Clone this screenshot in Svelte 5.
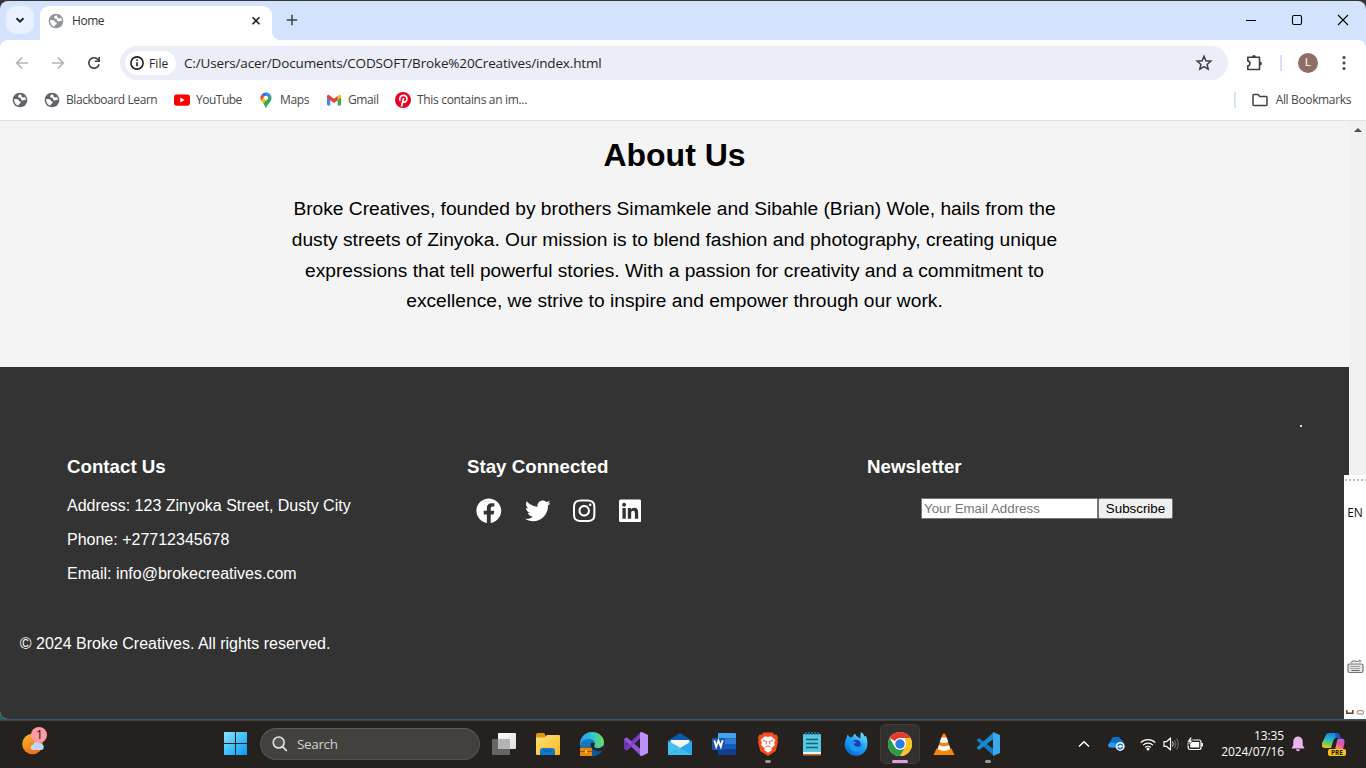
<script>
  const contact = [
    'Address: 123 Zinyoka Street, Dusty City',
    'Phone: +27712345678',
    'Email: info@brokecreatives.com'
  ];
  const social = [
    { name: 'Facebook', w: 512, d: 'M504 256C504 119 393 8 256 8S8 119 8 256c0 123.78 90.69 226.38 209.25 245V327.69h-63V256h63v-54.64c0-62.15 37-96.48 93.67-96.48 27.14 0 55.52 4.84 55.52 4.84v61h-31.28c-30.8 0-40.41 19.12-40.41 38.73V256h68.78l-11 71.69h-57.78V501C413.31 482.38 504 379.78 504 256z' },
    { name: 'Twitter', w: 512, d: 'M459.37 151.716c.325 4.548.325 9.097.325 13.645 0 138.72-105.583 298.558-298.558 298.558-59.452 0-114.68-17.219-161.137-47.106 8.447.974 16.568 1.299 25.34 1.299 49.055 0 94.213-16.568 130.274-44.832-46.132-.975-84.792-31.188-98.112-72.772 6.498.974 12.995 1.624 19.818 1.624 9.421 0 18.843-1.3 27.614-3.573-48.081-9.747-84.143-51.98-84.143-102.985v-1.299c13.969 7.797 30.214 12.67 47.431 13.319-28.264-18.843-46.781-51.005-46.781-87.391 0-19.492 5.197-37.36 14.294-52.954 51.655 63.675 129.3 105.258 216.365 109.807-1.624-7.797-2.599-15.918-2.599-24.04 0-57.828 46.782-104.934 104.934-104.934 30.213 0 57.502 12.67 76.67 33.137 23.715-4.548 46.456-13.32 66.599-25.34-7.798 24.366-24.366 44.833-46.132 57.827 21.117-2.273 41.584-8.122 60.426-16.243-14.292 20.791-32.161 39.308-52.628 54.253z' },
    { name: 'Instagram', w: 448, d: 'M224.1 141c-63.6 0-114.9 51.3-114.9 114.9s51.3 114.9 114.9 114.9S339 319.5 339 255.9 287.7 141 224.1 141zm0 189.6c-41.1 0-74.7-33.5-74.7-74.7s33.5-74.7 74.7-74.7 74.7 33.5 74.7 74.7-33.6 74.7-74.7 74.7zm146.4-194.3c0 14.9-12 26.8-26.8 26.8-14.9 0-26.8-12-26.8-26.8s12-26.8 26.8-26.8 26.8 12 26.8 26.8zm76.1 27.2c-1.7-35.9-9.9-67.7-36.2-93.9-26.2-26.2-58-34.4-93.9-36.2-37-2.1-147.9-2.1-184.9 0-35.8 1.7-67.6 9.9-93.9 36.1s-34.4 58-36.2 93.9c-2.1 37-2.1 147.9 0 184.9 1.7 35.9 9.9 67.7 36.2 93.9s58 34.4 93.9 36.2c37 2.1 147.9 2.1 184.9 0 35.9-1.7 67.7-9.9 93.9-36.2 26.2-26.2 34.4-58 36.2-93.9 2.1-37 2.1-147.8 0-184.8zM398.8 388c-7.8 19.6-22.9 34.7-42.6 42.6-29.5 11.7-99.5 9-132.1 9s-102.7 2.6-132.1-9c-19.6-7.8-34.7-22.9-42.6-42.6-11.7-29.5-9-99.5-9-132.1s-2.6-102.7 9-132.1c7.8-19.6 22.9-34.7 42.6-42.6 29.5-11.7 99.5-9 132.1-9s102.7-2.6 132.1 9c19.6 7.8 34.7 22.9 42.6 42.6 11.7 29.5 9 99.5 9 132.1s2.7 102.7-9 132.1z' },
    { name: 'LinkedIn', w: 448, d: 'M416 32H31.9C14.3 32 0 46.5 0 64.3v383.4C0 465.5 14.3 480 31.9 480H416c17.6 0 32-14.5 32-32.3V64.3c0-17.8-14.4-32.3-32-32.3zM135.4 416H69V202.2h66.5V416zm-33.2-243c-21.3 0-38.5-17.3-38.5-38.5S80.9 96 102.2 96c21.2 0 38.5 17.3 38.5 38.5 0 21.3-17.2 38.5-38.5 38.5zm282.1 243h-66.4V312c0-24.8-.5-56.7-34.5-56.7-34.6 0-39.9 27-39.9 54.9V416h-66.4V202.2h63.7v29.2h.9c8.9-16.8 30.6-34.5 62.2-34.5 66.5 0 79.9 43.8 79.9 100.9V416z' }
  ];
</script>

{#snippet globe(color)}
  <svg width="16" height="16" viewBox="0 0 16 16">
    <circle cx="8" cy="8" r="7.300" fill={color} />
    <path d="M8.600 2.200C6.600 2.800 5.600 4.200 6.400 5.300c.5.800 1.900.4 2.500 1.200.5.800.3 1.700 1.400 1.900 1 .2 1.600-.8 3.400-.2.300-1.500 0-2.500-.5-3.400-1.100.5-2.200.9-3 .2-.8-.7-.9-1.700-1.600-2.800z" fill="#fff" />
    <path d="M2.100 7.200c1.400-.4 3.300-.3 4.300.6.8.7.6 1.500 1.600 1.800.9.300 1 1.100.3 1.600-.8.600-1.300.7-1.400 1.500l-.1.900C4 13.100 1.900 10.500 2.100 7.200z" fill="#fff" />
  </svg>
{/snippet}

<div class="screen">
  <div class="browser">
    <header class="tabs">
      <button class="tabsearch" aria-label="Search tabs">
        <svg width="12" height="12" viewBox="0 0 12 12"><path d="M2.500 4.200 6 7.600l3.500-3.400" fill="none" stroke="#1f1f1f" stroke-width="1.900" /></svg>
      </button>
      <div class="tab">
        {@render globe('#8f959b')}
        <span class="ui tabname">Home</span>
        <svg class="tabx" width="10" height="10" viewBox="0 0 10 10"><path d="M1.500 1.200l7 7m0-7l-7 7" stroke="#1f1f1f" stroke-width="1.600" /></svg>
      </div>
      <div class="flare"></div>
      <svg class="plus" width="12" height="12" viewBox="0 0 12 12"><path d="M6 .8v10.400M.8 6h10.400" stroke="#3c4043" stroke-width="1.500" /></svg>
      <div class="winctl">
        <svg width="12" height="12" viewBox="0 0 12 12"><path d="M1 6.500h10" stroke="#000" /></svg>
        <svg width="12" height="12" viewBox="0 0 12 12"><rect x="1.500" y="1.500" width="9" height="9" rx="1.500" fill="none" stroke="#000" stroke-width="1.100" /></svg>
        <svg width="12" height="12" viewBox="0 0 12 12"><path d="M1 1l10 10M11 1L1 11" stroke="#000" stroke-width="1.100" /></svg>
      </div>
    </header>

    <div class="toolbar">
      <svg class="nav" width="16" height="16" viewBox="0 0 16 16"><path d="M14 8H3M8 2.600 2.600 8 8 13.400" fill="none" stroke="#b4b4b4" stroke-width="1.600" /></svg>
      <svg class="nav" width="16" height="16" viewBox="0 0 16 16"><path d="M2 8h11M8 2.600 13.400 8 8 13.400" fill="none" stroke="#b4b4b4" stroke-width="1.600" /></svg>
      <svg class="nav" width="16" height="16" viewBox="0 0 16 16"><path d="M13.100 9.300A5.200 5.200 0 1 1 12 4.600l1 1" fill="none" stroke="#3c4043" stroke-width="1.600" /><path d="M13.200 2v4.300H8.800" fill="none" stroke="#3c4043" stroke-width="1.600" /></svg>
      <div class="omni">
        <div class="chip">
          <svg width="14" height="14" viewBox="0 0 14 14"><circle cx="7" cy="7" r="6.100" fill="none" stroke="#1f1f1f" stroke-width="1.600" /><path d="M7 6.200v4" stroke="#1f1f1f" stroke-width="1.600" /><circle cx="7" cy="4.100" r=".95" fill="#1f1f1f" /></svg>
          <span class="ui file">File</span>
        </div>
        <span class="ui url">C:/Users/acer/Documents/CODSOFT/Broke%20Creatives/index.html</span>
        <svg class="star" width="18" height="18" viewBox="0 0 18 18"><path d="M9 2.200l1.900 4.600 4.900.4-3.700 3.200 1.100 4.800L9 12.600l-4.200 2.600 1.100-4.800-3.700-3.200 4.900-.4z" fill="none" stroke="#3c4043" stroke-width="1.500" /></svg>
      </div>
      <svg class="puzzle" width="18" height="18" viewBox="0 0 18 18"><path d="M2.800 3.300h11.700v12.200H2.800v-3.600c1.400-.2 2.100-1.200 2.100-2.500s-.7-2.300-2.100-2.500z" fill="none" stroke="#3c4043" stroke-width="1.600" stroke-linejoin="round" /><path d="M7 3a1.900 1.900 0 0 1 3.800 0M15 7.500a1.900 1.900 0 0 1 0 3.800" fill="#3c4043" /></svg>
      <i class="sep"></i>
      <div class="avatar">L</div>
      <svg class="kebab" width="4" height="16" viewBox="0 0 4 16"><g fill="#3c4043"><circle cx="2" cy="2.600" r="1.500" /><circle cx="2" cy="8" r="1.500" /><circle cx="2" cy="13.400" r="1.500" /></g></svg>
    </div>

    <nav class="marks ui">
      <div class="mk" style:width="32px">{@render globe('#5f6368')}</div>
      <div class="mk" style:width="130px">{@render globe('#5f6368')}<span class="m1">Blackboard Learn</span></div>
      <div class="mk" style:width="84px">
        <svg width="16" height="16" viewBox="0 0 16 16"><rect y="2.500" width="16" height="11.200" rx="2.400" fill="#f00" /><path d="M6.300 5.600v5L10.600 8.100z" fill="#fff" /></svg>
        <span class="m2">YouTube</span>
      </div>
      <div class="mk" style:width="68px">
        <svg width="16" height="16" viewBox="0 0 16 16"><path d="M8 .5a5.500 5.500 0 0 0-4.300 2L6.300 4.700 9.700.8z" fill="#1a73e8" /><path d="M3.700 2.500A5.500 5.500 0 0 0 3.200 8.500L6.300 4.700z" fill="#ea4335" /><path d="M9.700.8 6.300 4.700A2.200 2.200 0 0 1 9.800 7.300L13 3.600A5.500 5.500 0 0 0 9.700.8z" fill="#4285f4" /><path d="M6.200 4.800 3.100 8.500c.5 1 1.300 2 2.200 3L9.800 7.200z" fill="#fbbc04" /><path d="M13 3.600 5.300 11.500C6.400 12.800 7 14 7.500 15.400q.5.700 1 0c1-3.400 5-5.400 5-9.400 0-.9-.2-1.700-.5-2.400z" fill="#34a853" /><circle cx="8" cy="6" r="2" fill="#fff" /></svg>
        <span class="m3">Maps</span>
      </div>
      <div class="mk" style:width="69px">
        <svg width="16" height="16" viewBox="0 0 16 16"><path d="M1 4v8.500q0 1 1 1h2.300V6z" fill="#4285f4" /><path d="M15 4v8.500q0 1-1 1h-2.300V6z" fill="#34a853" /><path d="M11.700 4l2-1.300Q15 2.500 15 4.200v1.500l-3.300 2.600z" fill="#fbbc04" /><path d="M1 5.700V4.200Q1.200 2 3 3l5 3.800L11.700 4v4.300L8 11 4.300 8.300z" fill="#ea4335" /></svg>
        <span class="m4">Gmail</span>
      </div>
      <div class="mk">
        <svg width="16" height="16" viewBox="0 0 16 16"><circle cx="8" cy="8" r="8" fill="#e60023" /><path d="M5.300 8.900C3.800 6 5.500 3.400 8.300 3.400c2.400 0 3.800 1.500 3.600 3.600-.3 2.400-2.300 3.900-3.900 2.800M8.600 6 6.500 14.500" fill="none" stroke="#fff" stroke-width="1.700" /></svg>
        <span class="m5">This contains an im...</span>
      </div>
      <i class="sep right"></i>
      <svg class="folder" width="18" height="16" viewBox="0 0 18 16"><path d="M2 3.500q0-1 1-1h4l1.800 2H15q1 0 1 1v7q0 1-1 1H3q-1 0-1-1z" fill="none" stroke="#3c4043" stroke-width="1.500" /></svg>
      <span class="m6">All Bookmarks</span>
    </nav>

    <div class="view">
      <main class="page">
        <section class="about">
          <h1>About Us</h1>
          <p>Broke Creatives, founded by brothers Simamkele and Sibahle (Brian) Wole, hails from the dusty streets of Zinyoka. Our mission is to blend fashion and photography, creating unique expressions that tell powerful stories. With a passion for creativity and a commitment to excellence, we strive to inspire and empower through our work.</p>
        </section>
        <footer>
          <i class="speck"></i>
          <div class="cols">
            <div>
              <h3>Contact Us</h3>
              {#each contact as line}<p>{line}</p>{/each}
            </div>
            <div>
              <h3>Stay Connected</h3>
              <div class="social">
                {#each social as s}
                  <svg height="25.600" width={s.w / 20} viewBox="0 0 {s.w} 512" aria-label={s.name}><path d={s.d} fill="#fff" /></svg>
                {/each}
              </div>
            </div>
            <div>
              <h3>Newsletter</h3>
              <form class="news">
                <input type="email" placeholder="Your Email Address" />
                <button type="button">Subscribe</button>
              </form>
            </div>
          </div>
          <p class="copy">© 2024 Broke Creatives. All rights reserved.</p>
        </footer>
      </main>
      <div class="scroll"><i></i></div>
    </div>
  </div>

  <aside class="lang">
    <i class="grip"></i>
    <span>EN</span>
    <svg class="kb" width="17" height="15" viewBox="0 0 17 15"><path d="M4 3.800q2-2.600 4-1.700 2.500 1.500 5-1.300M12.500 3.500 14 1.500" fill="none" stroke="#888" stroke-width="1.200" /><rect x="1" y="5" width="15" height="8.500" rx="1.500" fill="#e4e4e4" stroke="#777" stroke-width="1.200" /><path d="M3.500 7.500h10M3.500 9.500h10" stroke="#666" stroke-dasharray="1 1" /><path d="M4.500 11.500h8" stroke="#666" /></svg>
    <svg class="cut" width="20" height="5" viewBox="0 0 20 5"><path d="M1.800 0v3.300h6V0" fill="none" stroke="#6d3a24" stroke-width="1.500" /><rect x="12" y=".7" width="6.500" height="3.300" rx="1.500" fill="none" stroke="#96705c" /></svg>
  </aside>

  <div class="taskbar ui">
    <div class="weather">
      <svg width="30" height="30" viewBox="0 0 30 30">
        <defs><linearGradient id="sun" x1="0" y1="0" x2=".5" y2="1"><stop offset="0" stop-color="#f9bb2d" /><stop offset="1" stop-color="#ee6f14" /></linearGradient></defs>
        <circle cx="11.500" cy="17" r="10.300" fill="url(#sun)" />
        <path d="M11.500 23a2.700 2.700 0 0 1 .5-5.300 4.500 4.500 0 0 1 8.200-.6A3 3 0 0 1 20.500 23z" fill="#bcd7fa" />
        <circle cx="18" cy="8" r="8" fill="#ff9ba6" />
      </svg>
      <b>1</b>
    </div>
    <svg class="start" width="24" height="24" viewBox="0 0 24 24">
      <defs><linearGradient id="win" gradientUnits="userSpaceOnUse" x1="0" y1="0" x2="24" y2="24"><stop offset="0" stop-color="#8ce2ff" /><stop offset=".5" stop-color="#3dc1fa" /><stop offset="1" stop-color="#0a8ff5" /></linearGradient></defs>
      <path d="M0 0h11v11H0zM12 0h11v11H12zM0 12h11v11H0zM12 12h11v11H12z" fill="url(#win)" />
    </svg>
    <div class="search">
      <svg width="16" height="16" viewBox="0 0 16 16"><circle cx="6.700" cy="6.500" r="5.500" fill="#66656180" stroke="#e3e3e3" stroke-width="1.600" /><path d="M10.800 10.800l3.500 3.700" stroke="#e3e3e3" stroke-width="1.800" stroke-linecap="round" /></svg>
      <span>Search</span>
    </div>
    <div class="apps">
      <div class="app"><svg width="24" height="24" viewBox="0 0 24 24"><defs><linearGradient id="tv" x1="0" y1="0" x2="1" y2="1"><stop stop-color="#fff" /><stop offset="1" stop-color="#ddd" /></linearGradient></defs><rect x="6" y="1" width="18" height="16" rx="1" fill="url(#tv)" /><rect y="7" width="18" height="16" rx="1" fill="#666" /><rect x="6" y="7" width="12" height="10" fill="#b4b4b4" /></svg></div>
      <div class="app"><svg width="24" height="24" viewBox="0 0 24 24"><defs><linearGradient id="fo" x1="0" y1="0" x2="1" y2="1"><stop stop-color="#ffdf78" /><stop offset="1" stop-color="#fbb91c" /></linearGradient></defs><path d="M0 3q0-2 2-2h6l2 3v5H0z" fill="#d99a10" /><path d="M0 5.500h8.500L11 3h12q1 0 1 1v18q0 1-1 1H1q-1 0-1-1z" fill="url(#fo)" /><path d="M4 23v-4q0-3 3-3h9q3 0 3 3v4z" fill="#1178ce" /><path d="M7.500 19h8" stroke="#0757a0" stroke-width="1.300" /></svg></div>
      <div class="app"><svg width="24" height="24" viewBox="0 0 24 24"><defs><linearGradient id="ed" x1="0" y1=".5" x2="1" y2=".5"><stop stop-color="#2c9ce8" /><stop offset=".5" stop-color="#2ec4d4" /><stop offset="1" stop-color="#71dd54" /></linearGradient></defs><circle cx="12" cy="12" r="12" fill="#1277c5" /><path d="M0 11C1 4 6 0 12 0c7 0 12 5 12 10 0 4-3 6-6 6-3.500 0-4.500-1.500-3.500-3C16 10 13 7 9.500 7 5 7 1 9 0 13z" fill="url(#ed)" /><path d="M10.500 11c-1.500 4 1 8.500 7 8 2 0 4-1 5-2-2 5-6 7-10 7z" fill="#0c579f" /><path d="M14 10.500c2 2-1 3.500.7 5 1.500 1.200 5.500 1.400 8.300-1.500l1 3q-3 3-7 2-7-1-6-8z" fill="#24231f" /><rect y="16" width="12" height="8" fill="#e8890c" /><path d="M0 19.500h12" stroke="#a45800" /><path d="M3.500 16v-.7h5v.7" fill="none" stroke="#994f00" /><rect x="5" y="18.500" width="2" height="2.500" fill="#ffd86a" /></svg></div>
      <div class="app"><svg width="24" height="24" viewBox="0 0 24 24"><path d="M0 7 3 5.500V18.500L0 17z" fill="#6c34b1" /><path d="M1.300 18 17 5V0L.8 15z" fill="#7236ba" /><path d="M.5 6.500 3 5.500l14 12V24L.8 8.500z" fill="#8f55d4" /><path d="M2 17.500l1 1L17 5.500V1.500z" fill="#7d42c4" /><path d="M16 .5 18 0l6 3v18l-6 3-2-.5z" fill="#bd8ff8" /></svg></div>
      <div class="app"><svg width="24" height="24" viewBox="0 0 24 24"><path d="M0 8.500 12 1l12 7.500v8H0z" fill="#0b58a4" /><path d="M2.500 8h19v6L12 19l-9.500-5z" fill="#f4f4f4" /><path d="M0 9l12 6.500L0 23z" fill="#39b7ee" /><path d="M24 9 0 23h24z" fill="#29a9ed" /><path d="M0 9l24 14H0z" fill="#52c8f6" opacity=".55" /></svg></div>
      <div class="app"><svg width="24" height="24" viewBox="0 0 24 24"><path d="M6 1h17q1 0 1 1v4.500H6z" fill="#41a5ee" /><path d="M6 6.500h18V12H6z" fill="#2b7cd3" /><path d="M6 12h18v5H6z" fill="#185abd" /><path d="M6 17h18v5q0 1-1 1H6z" fill="#103f91" /><rect y="6" width="13" height="12" rx="1" fill="#1853b3" /><path d="M2.300 8.300l1.900 6.500L6.500 8.500l2.300 6.300 1.900-6.500" fill="none" stroke="#fff" stroke-width="1.900" /></svg></div>
      <div class="app run"><svg width="24" height="24" viewBox="0 0 24 24"><path d="M7.500.5h9l2 2.300 2.200-.2L22 6l-.6 2L22 10l-2.300 9L12 24l-7.700-5L2 10l.6-2L2 6l1.300-3.400 2.200.2z" fill="#fb4b1e" /><path d="M12 5l3-.8 4.500 3.700-1.400 2.500.8 2.700-3.600 3.400.5 1.700L12 20.700 8.200 18l.5-1.700-3.600-3.200.8-2.700-1.400-2.500L9 4.200z" fill="#fff" /><path d="M7 8.500l3.500.9-.6 3M17 8.500l-3.500.9.6 3M9.500 15 12 13.900l2.500 1.100" fill="none" stroke="#fb4b1e" stroke-width=".9" /></svg></div>
      <div class="app"><svg width="24" height="24" viewBox="0 0 24 24"><rect x="3" y="2" width="18" height="21" rx="1" fill="#59c6e2" /><path d="M3 20h18v2H3z" fill="#e8f5f8" /><path d="M3 22h18v1.500H3z" fill="#c96e22" /><path d="M6 7.500h12M6 11.500h12M6 15.500h12" stroke="#11627c" stroke-width="1.700" /><path d="M6 0v3M9 0v3M12 0v3M15 0v3M18 0v3" stroke="#187e9d" stroke-width="1.500" /></svg></div>
      <div class="app"><svg width="24" height="24" viewBox="0 0 24 24"><defs><linearGradient id="ff" x1=".9" y1="0" x2=".3" y2="1"><stop stop-color="#73e8fb" /><stop offset=".5" stop-color="#23a3f2" /><stop offset="1" stop-color="#0967d7" /></linearGradient></defs><path d="M2 7 3.500 2.500 6 5.500 8.500 5C9 3 10 1.500 11.500 2 12 5 15 5 16 6.500 17 5 16 2 17 0c2 1 3 3 3.500 4.500L22 4c1 2 1.500 5 1.400 8A11.400 11.400 0 1 1 2 7z" fill="url(#ff)" /><circle cx="12" cy="12.500" r="4.800" fill="#2838b5" /><path d="M5 9l5 .2 2.500 1.300-2.800 1.600c.5 2 3.300 3.500 5.700 2.300 2-.8 3-2.500 2.500-5 3 5 0 10-5.500 10C7 19.500 3.500 14 5 9z" fill="#189bf3" /></svg></div>
      <div class="app active"><svg width="24" height="24" viewBox="0 0 24 24"><circle cx="12" cy="12" r="12" fill="#fff" /><path d="M12 12 1.600 6A12 12 0 0 1 22.400 6H12z" fill="#e33b2e" /><path d="M22.400 6A12 12 0 0 1 12 24l5.200-9V6z" fill="#fcc31e" /><path d="M1.600 6A12 12 0 0 0 12 24l5.200-9H6.800z" fill="#2b9a48" /><circle cx="12" cy="12" r="6" fill="#fff" /><circle cx="12" cy="12" r="4.700" fill="#2c7be9" /></svg></div>
      <div class="app"><svg width="24" height="24" viewBox="0 0 24 24"><path d="M4.500 16.500h15l3 6.500h-21z" fill="#fa8500" /><path d="M10.500 2.500q1.500-2 3 0L19 18.500q-7 4-14 0z" fill="#f78410" /><path d="M9.300 6h5.400l1.500 4.500q-4 2-8.400 0zM7 13.500q5 3 10 0l1.300 4q-6 4-12.600 0z" fill="#fff" transform="translate(0 -.5)" /></svg></div>
      <div class="app run"><svg width="24" height="24" viewBox="0 0 24 24"><path d="M1 7.500 3 6l15 11.500V24L.8 8.500z" fill="#1477be" /><path d="M.8 15.500 18 0v6.500L3 18l-2-1.500z" fill="#168bd2" /><path d="M17 0l7 3v18l-7 3z" fill="#38a9ef" /></svg></div>
    </div>
    <div class="tray">
      <svg class="up" width="12" height="8" viewBox="0 0 12 8"><path d="M1 6.500 6 1.700l5 4.800" fill="none" stroke="#fff" stroke-width="1.500" /></svg>
      <svg class="cloud" width="18" height="14" viewBox="0 0 18 14"><path d="M3.500 10.500A3.500 3.500 0 0 1 2.800 4 5.200 5.200 0 0 1 12.500 2 4 4 0 0 1 15 7v3.500z" fill="#0b70ca" /><path d="M0 8q3-4 7-1.500L12 10.500H3Q0 10.500 0 8z" fill="#2b9aed" /><circle cx="12.200" cy="9.400" r="4.500" fill="#e8f4ff" /><path d="M9.700 9q2.500-3.500 4.900-.5M14.700 10q-2.500 3.500-4.900.5" fill="none" stroke="#0f6bbc" stroke-width="1.300" /></svg>
      <svg class="wifi" width="16" height="13" viewBox="0 0 16 13"><g fill="none" stroke="#fff" stroke-width="1.200"><path d="M.7 4.700a10.300 10.300 0 0 1 14.600 0M3 7.200a7 7 0 0 1 10 0M5.200 9.500a4 4 0 0 1 5.600 0" /></g><circle cx="8" cy="11" r="1.500" fill="#fff" /></svg>
      <svg class="vol" width="17" height="14" viewBox="0 0 17 14"><path d="M1 4.700h2.500L7.500 1v12L3.500 9.300H1z" fill="none" stroke="#fff" stroke-width="1.200" stroke-linejoin="round" /><path d="M9.500 4.500q1.500 2.500 0 5" fill="none" stroke="#ddd" /><path d="M11.500 3q2.700 4 0 8M13.500 1.500q3.500 5.500 0 11" fill="none" stroke="#777" /></svg>
      <svg class="bat" width="17" height="14" viewBox="0 0 17 14"><rect x="1.200" y="3" width="12.800" height="9.500" rx="2" fill="none" stroke="#fff" stroke-width="1.200" /><path d="M3.200 5h9v5.500h-9z" fill="#fff" /><path d="M14.300 6h1.600v3.500h-1.600z" fill="#fff" /><path d="M3.300 0 0 5.300h2.300L1.300 8.500 6.300 3.300H4L5 0z" fill="#fff" stroke="#24211f" stroke-width=".7" /></svg>
      <div class="clock"><span class="t1">13:35</span><span class="t2">2024/07/16</span></div>
      <svg class="bell" width="14" height="16" viewBox="0 0 14 16"><path d="M7 .5a4.700 4.700 0 0 1 4.700 4.700V9l1.800 3.500H.5L2.300 9V5.200A4.700 4.700 0 0 1 7 .5zM5 13.300h4a2 2 0 0 1-4 0z" fill="#edb4f0" /></svg>
      <div class="copilot">
        <svg width="24" height="24" viewBox="0 0 24 24">
          <defs>
            <linearGradient id="ca" x1=".5" y1="0" x2=".2" y2="1"><stop stop-color="#1482e2" /><stop offset=".45" stop-color="#27bbc6" /><stop offset=".75" stop-color="#86cc41" /><stop offset="1" stop-color="#f5c52b" /></linearGradient>
            <linearGradient id="cb" x1=".7" y1="0" x2=".3" y2="1"><stop stop-color="#a76bec" /><stop offset=".5" stop-color="#e9559b" /><stop offset="1" stop-color="#ff975a" /></linearGradient>
          </defs>
          <path d="M7 1h8q2 0 2.500 2L18.500 6h-4Q12 6 11.500 8L9 16H3q-4 0-3-5L3.500 4Q4.500 1 7 1z" fill="url(#ca)" />
          <path d="M13 1h1.500q2.500 0 3 2l1 3h-4l-1 .4z" fill="#1759c4" />
          <path d="M16.500 6.500H19q4 0 3.500 4L21 18h-8l2-9q.5-2.500 1.500-2.500z" fill="url(#cb)" />
        </svg>
        <b>PRE</b>
      </div>
    </div>
  </div>
</div>

<style>
  :global(body) { margin: 0; overflow: hidden; }
  * { box-sizing: border-box; }
  svg { display: block; flex: none; }
  .screen { position: relative; width: 1366px; height: 768px; overflow: hidden; background: linear-gradient(#373435 700px, #1d6b50 701px); display: flex; flex-direction: column; }
  .ui { font-family: "Open Sans", "Noto Sans", sans-serif; font-size: 12px; white-space: nowrap; }
  .browser { height: 719px; padding-top: 1px; display: flex; flex-direction: column; }

  .tabs { height: 47px; margin-bottom: -8px; background: #d3e3fd; border-radius: 8px 8px 0 0; display: flex; align-items: flex-start; padding-left: 6px; flex: none; }
  .tabsearch { width: 28px; height: 28px; margin: 5px 6px 0 0; border: 0; border-radius: 10px; background: #eaf1fe; display: flex; align-items: center; justify-content: center; padding: 0; }
  .tab { width: 232px; height: 35px; margin-top: 5px; background: #fff; border-radius: 9px 9px 0 0; display: flex; align-items: center; padding: 0 11px 6px 8px; }
  .tabname { margin-left: 8px; flex: 1; color: #333; letter-spacing: -.45px; }
  .flare { width: 8px; height: 8px; margin-top: 31px; background: radial-gradient(circle at 100% 0, #d3e3fd 7.500px, #fff 8px); }
  .plus { margin: 13px 0 0 6px; }
  .winctl { margin: 13px 17px 0 auto; display: flex; gap: 34px; }

  .toolbar { height: 46px; flex: none; background: #fff; border-radius: 8px 8px 0 0; display: flex; align-items: center; padding-left: 14px; }
  .nav { margin-right: 20px; }
  .omni { width: 1108px; height: 34px; margin-left: -2px; border-radius: 17px; background: #ebeef7; display: flex; align-items: center; padding: 0 15px 0 5px; }
  .chip { width: 51px; height: 24px; border-radius: 12px; background: #fff; display: flex; align-items: center; padding-left: 5px; }
  .file { margin-left: 5px; color: #1f1f1f; font-weight: 500; letter-spacing: .1px; }
  .url { margin: -1px 0 0 8px; flex: 1; font-size: 13.500px; color: #1f1f1f; letter-spacing: -.155px; }
  .puzzle { margin-left: 17px; }
  .sep { width: 2px; height: 16px; background: #d3e3fd; }
  .toolbar .sep { margin-left: 17px; }
  .avatar { width: 20px; height: 20px; margin-left: 16px; border-radius: 50%; background: #8d6e63; color: #fff; font: 11px/20px Roboto, sans-serif; text-align: center; }
  .kebab { margin-left: 24px; }

  .marks { height: 35px; flex: none; background: #fff; border-bottom: 1px solid #dedede; display: flex; align-items: center; padding: 0 15px 7px 12px; color: #474747; }
  .mk { display: flex; align-items: center; gap: 6px; flex: none; }
  .m1 { letter-spacing: -.42px; }
  .m2 { letter-spacing: -.5px; }
  .m3 { letter-spacing: -.35px; }
  .m4 { letter-spacing: -.4px; }
  .m5 { letter-spacing: -.32px; }
  .m6 { letter-spacing: -.36px; }
  .right { margin-left: auto; margin-right: 15px; }
  .folder { margin-right: 7px; }

  .view { flex: 1; display: flex; min-height: 0; }
  .page { width: 1349px; background: #f4f4f4; font-family: Arial, "Liberation Sans", sans-serif; display: flex; flex-direction: column; overflow: hidden; border-radius: 0 0 0 8px; }
  .about { height: 246px; flex: none; text-align: center; color: #000; }
  h1 { margin: 16px 0 20.300px; font-size: 32px; line-height: 37px; }
  .about p { width: 800px; margin: 0 auto; font-size: 19.200px; line-height: 30.720px; }
  footer { flex: 1; background: #333; color: #fff; display: flex; flex-direction: column; align-items: flex-start; }
  .speck { width: 2px; height: 2px; background: #ddd; margin: 58px 0 0 1300px; }
  .cols { display: flex; margin: 29px 0 0 67px; height: 151px; }
  .cols > div { width: 400px; display: flex; flex-direction: column; }
  h3 { margin: 0 0 20px; font-size: 18.720px; line-height: 21px; }
  .cols p { margin: 0 0 16px; font-size: 16px; line-height: 18px; }
  .social { display: flex; gap: 23px; padding-left: 9.200px; margin-top: 1px; }
  .news { display: flex; margin: 1px 0 0 54px; }
  .news input { width: 177px; height: 21px; margin: 0; padding: 1px 2px; border: 1px solid #767676; font: 13.333px Arial, "Liberation Sans", sans-serif; background: #fff; }
  .news input::placeholder { color: #757575; }
  .news button { width: 75px; height: 21px; padding: 0; border: 1px solid #767676; border-radius: 2px; background: #efefef; color: #000; font: 13.333px Arial, "Liberation Sans", sans-serif; }
  .copy { margin: 28px 0 0 19.800px; font-size: 16px; line-height: 18px; }
  .scroll { width: 17px; background: #f1f1f1; display: flex; justify-content: center; padding-top: 7px; }
  .scroll i { width: 0; height: 0; border: 4px solid transparent; border-top: 0; border-bottom: 4px solid #505050; }

  .lang { position: absolute; left: 1344px; top: 475px; width: 22px; height: 244px; background: #fff; display: flex; flex-direction: column; align-items: center; overflow: hidden; }
  .grip { width: 21px; height: 2px; margin-top: 4px; background: repeating-linear-gradient(90deg, #bbb 0 2px, #fff 2px 4px); }
  .lang span { margin-top: 25px; font: 12px/14px "Open Sans", sans-serif; color: #111; }
  .kb { margin-top: 139px; }
  .cut { margin-top: 36px; }

  .taskbar { height: 49px; background: #24211e; border-top: 1px solid #31536b; box-shadow: inset 0 1px #45403c; display: flex; align-items: center; color: #fff; }
  .weather { width: 30px; height: 30px; margin: -4px 0 0 21px; display: grid; }
  .weather svg, .weather b { grid-area: 1 / 1; }
  .weather b { font: 12px/16px "Open Sans", sans-serif; color: #111; padding-left: 15px; }
  .start { margin-left: 173px; }
  .search { width: 220px; height: 32px; margin-left: 12px; border-radius: 16px; background: #43413d; border: 1px solid #53514c; border-top-color: #5f5d58; display: flex; align-items: center; padding-left: 11px; font-size: 13.500px; color: #d2d0cc; }
  .search span { margin: -1px 0 0 9px; letter-spacing: -.35px; }
  .apps { display: flex; gap: 4px; margin-left: 4px; }
  .app { position: relative; width: 40px; height: 40px; border-radius: 5px; display: flex; align-items: center; justify-content: center; }
  .active { background: #33302e; border: 1px solid #3d3a38; }
  .run::after, .active::after { content: ''; position: absolute; left: 17px; bottom: 1px; width: 6px; height: 3px; border-radius: 2px; background: #9b9997; }
  .active::after { left: 11px; bottom: 0; width: 16px; background: #dca0e2; }
  .tray { display: flex; align-items: center; margin-left: 70px; }
  .cloud { margin-left: 18px; }
  .wifi { margin-left: 14px; }
  .vol { margin-left: 7px; }
  .bat { margin-left: 7px; }
  .clock { width: 80px; display: flex; flex-direction: column; align-items: flex-end; line-height: 16px; letter-spacing: -.1px; }
  .bell { margin-left: 7px; }
  .copilot { width: 24px; height: 24px; margin-left: 17px; display: grid; }
  .copilot svg, .copilot b { grid-area: 1 / 1; }
  .copilot b { align-self: end; justify-self: end; width: 18px; height: 7px; border-radius: 2px; background: #f8c41c; color: #241a00; font: 700 6.500px/7px "Open Sans", sans-serif; text-align: center; }
</style>
